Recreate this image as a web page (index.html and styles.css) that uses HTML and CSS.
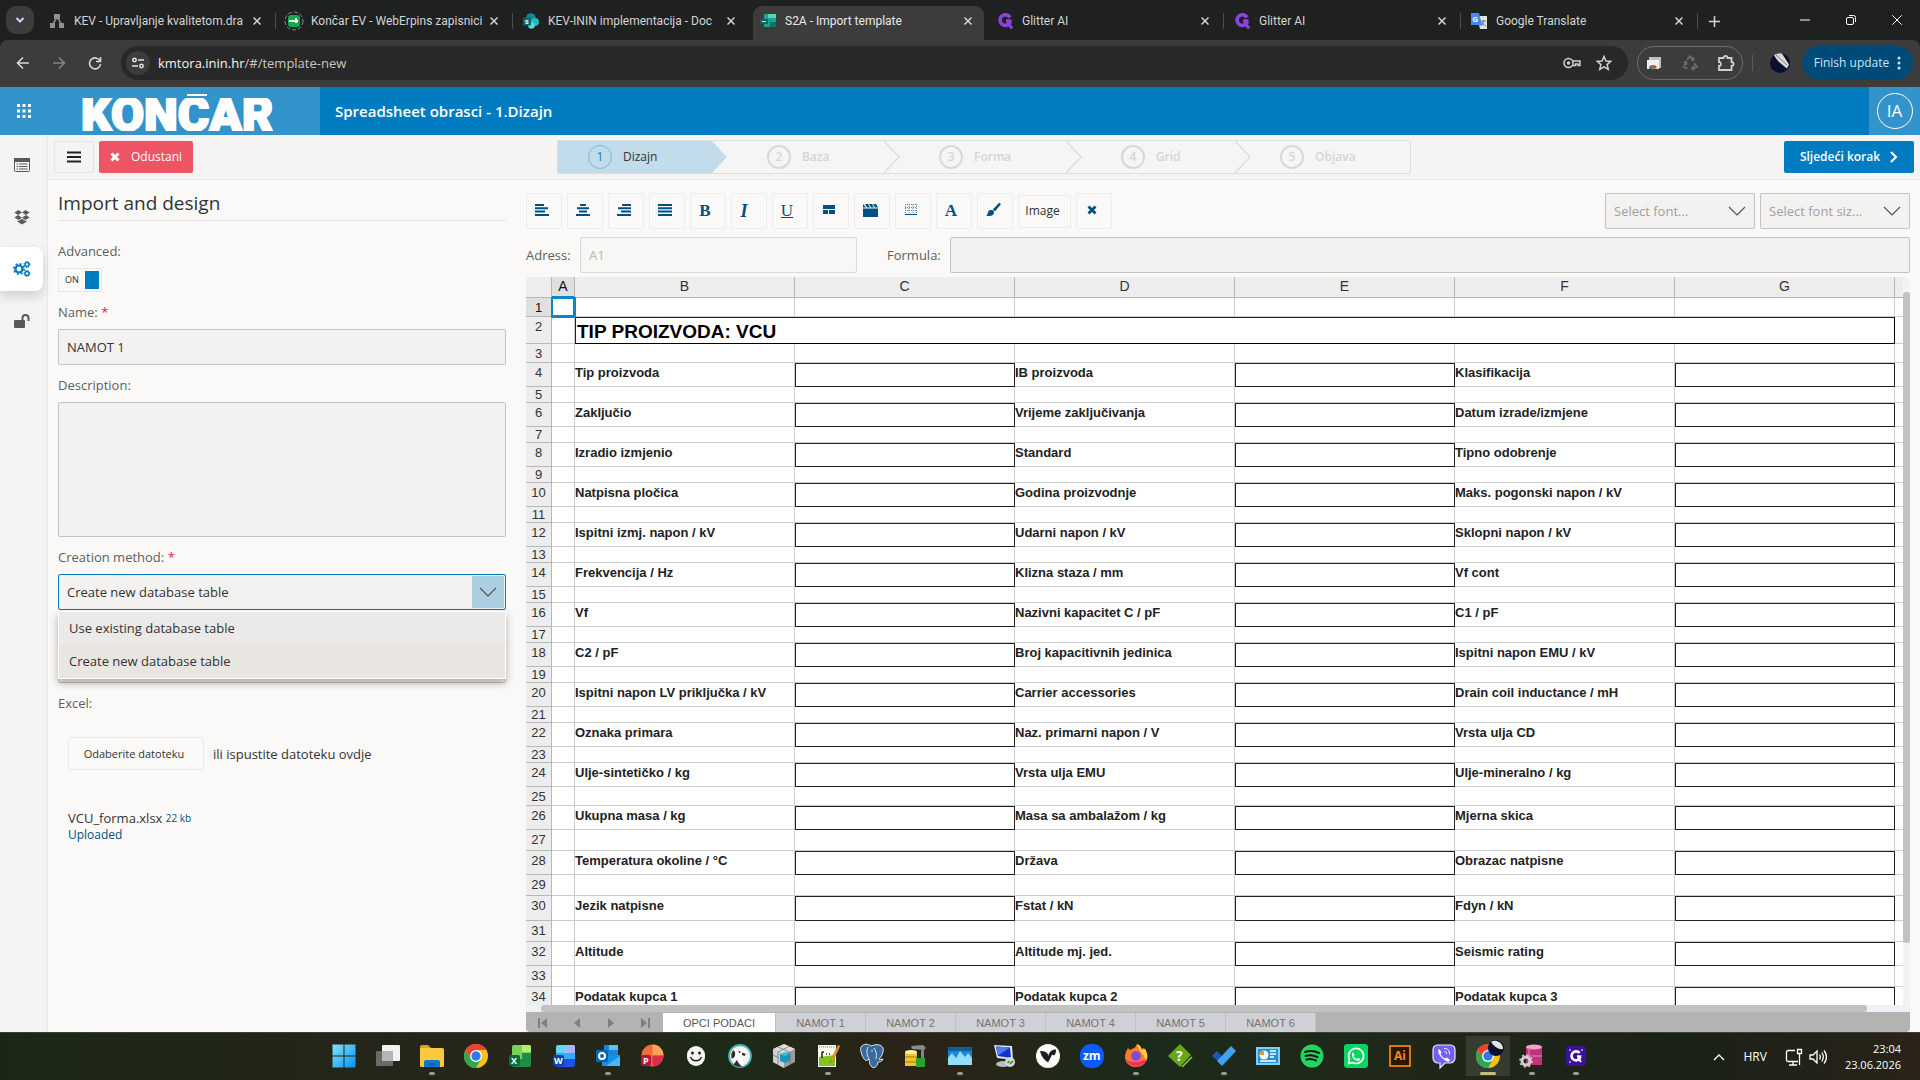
FILE: index.html
```html
<!DOCTYPE html>
<html lang="hr">
<head>
<meta charset="utf-8">
<title>S2A - Import template</title>
<link rel="stylesheet" href="styles.css">
</head>
<body>
<header class="browser">
  <div class="tabstrip">
    <button class="tabsearch" aria-label="Search tabs"><svg width="10" height="10" viewBox="0 0 10 10"><path d="M1.500 3l3.500 3.500L8.500 3" fill="none" stroke="#c7d8f5" stroke-width="2"/></svg></button>
    <div class="tab sep"><svg class="fav" viewBox="0 0 16 16"><g fill="#8f9191"><rect x="5" y="1" width="6" height="5"/><rect x="1" y="10" width="5" height="5"/><rect x="10" y="10" width="5" height="5"/></g><path d="M7.500 5L4 11M8.500 5l4 6" stroke="#8f9191" stroke-width="1.500"/></svg><span class="tabtitle">KEV - Upravljanje kvalitetom.dra</span><button class="close" aria-label="Close"><svg width="8" height="8" viewBox="0 0 8 8"><path d="M0.500 0.500l7 7M7.500 0.500l-7 7"/></svg></button></div>
    <div class="tab sep"><svg class="fav big" viewBox="0 0 20 20"><circle cx="10" cy="10" r="9" fill="none" stroke="#8b8d8d" stroke-dasharray="4 2"/><rect x="4" y="4" width="12" height="12" rx="3" fill="#0cab4f"/><path d="M5 10h9M12 7v5" stroke="#fff" stroke-width="2"/></svg><span class="tabtitle">Končar EV - WebErpins zapisnici</span><button class="close" aria-label="Close"><svg width="8" height="8" viewBox="0 0 8 8"><path d="M0.500 0.500l7 7M7.500 0.500l-7 7"/></svg></button></div>
    <div class="tab"><svg class="fav" viewBox="0 0 16 16"><circle cx="8" cy="5" r="4.800" fill="#138a93"/><circle cx="12" cy="9" r="4" fill="#28b5c4"/><circle cx="8.500" cy="12.500" r="3.300" fill="#5fd5dd"/><rect y="4.500" width="8" height="8" rx="1" fill="#036c70"/><text x="2" y="11" font-size="7" font-weight="700" fill="#fff">s</text></svg><span class="tabtitle">KEV-ININ implementacija - Doc</span><button class="close" aria-label="Close"><svg width="8" height="8" viewBox="0 0 8 8"><path d="M0.500 0.500l7 7M7.500 0.500l-7 7"/></svg></button></div>
    <div class="tab current"><svg class="fav" viewBox="0 0 16 16"><rect x="4" y="1" width="12" height="13" fill="#1aa295"/><path d="M8 1h8v4H8z" fill="#55d3c4"/><path d="M10 9h6v5h-6z" fill="#14706a"/><path d="M0 6h8v5H0z" fill="#0e635c"/><path d="M2 8.500h4" stroke="#cde9e6"/></svg><span class="tabtitle">S2A - Import template</span><button class="close" aria-label="Close"><svg width="8" height="8" viewBox="0 0 8 8"><path d="M0.500 0.500l7 7M7.500 0.500l-7 7"/></svg></button></div>
    <div class="tab sep"><svg class="fav" viewBox="0 0 16 16"><path d="M13 4.500A5.300 5.300 0 1 0 12.800 10V8H9" fill="none" stroke="#8b43e0" stroke-width="3.600"/><path d="M11 10l4 5.500" stroke="#8b43e0" stroke-width="3"/></svg><span class="tabtitle">Glitter AI</span><button class="close" aria-label="Close"><svg width="8" height="8" viewBox="0 0 8 8"><path d="M0.500 0.500l7 7M7.500 0.500l-7 7"/></svg></button></div>
    <div class="tab sep"><svg class="fav" viewBox="0 0 16 16"><path d="M13 4.500A5.300 5.300 0 1 0 12.800 10V8H9" fill="none" stroke="#8b43e0" stroke-width="3.600"/><path d="M11 10l4 5.500" stroke="#8b43e0" stroke-width="3"/></svg><span class="tabtitle">Glitter AI</span><button class="close" aria-label="Close"><svg width="8" height="8" viewBox="0 0 8 8"><path d="M0.500 0.500l7 7M7.500 0.500l-7 7"/></svg></button></div>
    <div class="tab sep"><svg class="fav" viewBox="0 0 16 16"><path d="M6 3h10v13H9z" fill="#dfe1e4"/><path d="M10 8h5M12.500 7v1c0 3-1 4-3 5M11 9c0 2 2 3 4 4" stroke="#6c7a86" fill="none"/><path d="M0 0h8l3 12H0z" fill="#4687f0"/><text x="1.500" y="8.500" font-size="8" font-weight="700" fill="#fff">G</text></svg><span class="tabtitle">Google Translate</span><button class="close" aria-label="Close"><svg width="8" height="8" viewBox="0 0 8 8"><path d="M0.500 0.500l7 7M7.500 0.500l-7 7"/></svg></button></div>
    <button class="newtab" aria-label="New tab"><svg width="11" height="11" viewBox="0 0 11 11"><path d="M5.500 0v11M0 5.500h11" stroke="#d6d6d6" stroke-width="1.500"/></svg></button>
    <div class="winctl">
      <button aria-label="Minimise"><svg width="10" height="10" viewBox="0 0 10 10"><path d="M0 5h10"/></svg></button>
      <button aria-label="Restore"><svg width="10" height="10" viewBox="0 0 10 10"><rect x="0.500" y="2.500" width="7" height="7" rx="1.500"/><path d="M3 0.500h4.500a2 2 0 0 1 2 2V7"/></svg></button>
      <button aria-label="Close window"><svg width="10" height="10" viewBox="0 0 10 10"><path d="M0.300 0.300l9.400 9.400M9.700 0.300L0.300 9.700"/></svg></button>
    </div>
  </div>
  <div class="navbar">
    <div class="navbtns">
      <button aria-label="Back"><svg width="14" height="14" viewBox="0 0 14 14"><path d="M13 7H1.500M7 1.500L1.500 7 7 12.500"/></svg></button>
      <button class="dim" aria-label="Forward"><svg width="14" height="14" viewBox="0 0 14 14"><path d="M1 7h11.500M7 1.500L12.500 7 7 12.500"/></svg></button>
      <button aria-label="Reload"><svg width="14" height="14" viewBox="0 0 14 14"><path d="M12 5A5.500 5.500 0 1 0 12.500 8M12.500 1v4.500H8"/></svg></button>
    </div>
    <div class="omnibox">
      <button class="site" aria-label="Site information"><svg width="14" height="14" viewBox="0 0 14 14"><circle cx="3.500" cy="4" r="1.700"/><path d="M7 4h6M1 10h6"/><circle cx="10.500" cy="10" r="1.700"/></svg></button>
      <p class="url"><b>kmtora.inin.hr</b>/#/template-new</p>
      <svg class="oi" width="18" height="14" viewBox="0 0 18 14"><circle cx="5.500" cy="7" r="4.500"/><circle cx="5.500" cy="7" r="1" /><path d="M9.500 5H17v4.500h-2V8h-2.500v1.500H9.500"/></svg>
      <svg class="oi" width="16" height="16" viewBox="0 0 16 16"><path d="M8 1.500l2 4.500 4.800.4-3.700 3.200 1.200 4.800L8 11.900l-4.300 2.500 1.200-4.800L1.200 6.400 6 6z"/></svg>
    </div>
    <div class="exts">
      <svg width="16" height="16" viewBox="0 0 16 16"><rect x="3" y="2" width="12" height="11" fill="#bfc1c3"/><rect x="1" y="5" width="12" height="9" fill="#f3f3f3"/><path d="M3 14a4 4 0 0 1 8 0z" fill="#e33b2e"/><path d="M3 14a4 4 0 0 1 1-3l2 3z" fill="#22a550"/><path d="M8 14l3-2v2z" fill="#f5bd16"/><circle cx="7" cy="13" r="1.500" fill="#4285f4"/></svg>
      <svg width="16" height="16" viewBox="0 0 16 16" fill="none" stroke="#707070" stroke-width="1.500"><path d="M5 5l3-4 3 4M9 5h2.500V2M4 7l-2.500 5 4 1.500M2 7h2.500v3M12 8l3 4-5 1.500M12 11l-2 2.500 2 2"/></svg>
      <svg width="18" height="18" viewBox="0 0 18 18" fill="none" stroke="#cfcfcf" stroke-width="1.800"><path d="M2 4h4.500a2 2 0 0 1 4 0H14.500v4a2 2 0 0 1 0 4v4H2v-4c2.500 0 2.500-4 0-4z"/></svg>
    </div>
    <i class="vsep"></i>
    <svg class="me" width="20" height="20" viewBox="0 0 20 20"><circle cx="10" cy="10" r="10" fill="#0a1030"/><path d="M4 2a10 10 0 0 1 8-1.500l7 11-2 4C12 12 7 8 4 2z" fill="#d9d8cc"/><path d="M6 2l11 10" stroke="#7c8087"/></svg>
    <button class="update">Finish update <svg width="4" height="14" viewBox="0 0 4 14" fill="#c2e7ff"><circle cx="2" cy="2" r="1.500"/><circle cx="2" cy="7" r="1.500"/><circle cx="2" cy="12" r="1.500"/></svg></button>
  </div>
</header>

<div class="apphead">
  <div class="brand">
    <svg width="14" height="14" viewBox="0 0 14 14" fill="#fff"><path d="M0 0h3v3H0zM5.500 0h3v3h-3zM11 0h3v3h-3zM0 5.500h3v3H0zM5.500 5.500h3v3h-3zM11 5.500h3v3h-3zM0 11h3v3H0zM5.500 11h3v3h-3zM11 11h3v3h-3z"/></svg>
    <div class="logo"><span>KONČAR</span></div>
  </div>
  <h1>Spreadsheet obrasci - 1.Dizajn</h1>
  <div class="user"><button>IA</button></div>
</div>

<div class="app">
  <nav class="side">
    <a href="#forms" aria-label="Forms"><svg width="16" height="14" viewBox="0 0 16 14"><rect x="0.500" y="0.500" width="15" height="13" rx="1" fill="none" stroke="#595959"/><path d="M0 0h16v4H0z" fill="#595959"/><path d="M2.500 6h1.500M2.500 8.500h1.500M2.500 11h1.500M5 6h8.500M5 8.500h8.500M5 11h8.500" stroke="#595959"/></svg></a>
    <a href="#modules" aria-label="Modules"><svg width="16" height="16" viewBox="0 0 16 16" fill="#595959"><path d="M4.500 1L8 3.500 4 6 .5 3.500zM11.500 1l4 2.500L12 6 8 3.500zM.5 8.500L4 6l4 2.700-3.500 2.300zM12 6l3.500 2.500-4 2.500L8 8.700zM8 9.700l3.500 2.300 1-.5v1.200L8 15.500l-4.500-2.800v-1.200l1 .5z"/></svg></a>
    <a class="on" href="#settings" aria-label="Settings"><svg width="18" height="16" viewBox="0 0 18 16" fill="none" stroke="#0078c0"><circle cx="6" cy="8" r="3.500" stroke-width="2.200"/><circle cx="6" cy="8" r="5.200" stroke-width="1.600" stroke-dasharray="2 2.080"/><circle cx="14" cy="3.500" r="2" stroke-width="1.500"/><circle cx="14" cy="3.500" r="3" stroke-dasharray="1.200 1.160"/><circle cx="14" cy="12.500" r="2" stroke-width="1.500"/><circle cx="14" cy="12.500" r="3" stroke-dasharray="1.200 1.160"/></svg></a>
    <a href="#access" aria-label="Access"><svg width="16" height="14" viewBox="0 0 16 14"><rect x="0" y="6" width="11" height="8" rx="1" fill="#595959"/><path d="M8.500 6V4a3 3 0 0 1 6 0v3" fill="none" stroke="#595959" stroke-width="2"/></svg></a>
  </nav>
  <div class="content">
    <div class="steps">
      <button class="menu" aria-label="Menu"><svg width="14" height="12" viewBox="0 0 14 12"><path d="M0 1.500h14M0 6h14M0 10.500h14" stroke="#222" stroke-width="2"/></svg></button>
      <button class="cancel"><svg width="10" height="10" viewBox="0 0 10 10"><path d="M1.500 1.500l7 7M8.500 1.500l-7 7" stroke="#fff" stroke-width="3"/></svg>Odustani</button>
      <ol class="stepper">
        <li class="active"><span class="step"><i>1</i>Dizajn</span><svg width="16" height="32" viewBox="0 0 16 32"><path d="M0 0l15 16L0 32z" fill="#c2dcec"/></svg></li>
        <li><span class="step"><i>2</i>Baza</span><svg width="16" height="32" viewBox="0 0 16 32"><path d="M0 0l15 16L0 32"/></svg></li>
        <li><span class="step"><i>3</i>Forma</span><svg width="16" height="32" viewBox="0 0 16 32"><path d="M0 0l15 16L0 32"/></svg></li>
        <li><span class="step"><i>4</i>Grid</span><svg width="16" height="32" viewBox="0 0 16 32"><path d="M0 0l15 16L0 32"/></svg></li>
        <li class="last"><span class="step"><i>5</i>Objava</span></li>
      </ol>
      <button class="next">Sljedeći korak<svg width="8" height="12" viewBox="0 0 8 12"><path d="M1 1l5 5-5 5" fill="none" stroke="#fff" stroke-width="2"/></svg></button>
    </div>
    <main class="work">
      <form class="panel">
        <h2>Import and design</h2>
        <div class="field"><label for="adv">Advanced:</label><div class="switch"><span>ON</span><input type="checkbox" id="adv" checked></div></div>
        <div class="field"><label for="name">Name: <em>*</em></label><input id="name" type="text" value="NAMOT 1"></div>
        <div class="field"><label for="desc">Description:</label><textarea id="desc"></textarea></div>
        <div class="field combo"><label for="method">Creation method: <em>*</em></label>
          <div class="selwrap open"><select id="method"><option>Create new database table</option><option>Use existing database table</option></select><span class="arrow"><svg width="18" height="10" viewBox="0 0 18 10"><path d="M1 1l8 8 8-8"/></svg></span></div>
          <ul class="popup" role="listbox"><li role="option">Use existing database table</li><li role="option" aria-selected="true">Create new database table</li></ul>
        </div>
        <div class="field"><label for="table">&nbsp;</label><input id="table" type="text"></div>
        <div class="field upload"><label for="pick">Excel:</label>
          <div class="drop"><button type="button" id="pick">Odaberite datoteku</button><span>ili ispustite datoteku ovdje</span></div>
          <p class="file">VCU_forma.xlsx <small>22 kb</small></p>
          <p class="state">Uploaded</p>
        </div>
      </form>
      <section class="editor">
        <div class="tools">
          <button aria-label="Left"><svg width="14" height="12" viewBox="0 0 14 12"><path d="M0 1h9M0 4.300h13M0 7.600h10M0 11h14"/></svg></button>
          <button aria-label="Centre"><svg width="14" height="12" viewBox="0 0 14 12"><path d="M4 1h6M1 4.300h12M3 7.600h8M0 11h14"/></svg></button>
          <button aria-label="Right"><svg width="14" height="12" viewBox="0 0 14 12"><path d="M5 1h9M1 4.300h13M4 7.600h10M0 11h14"/></svg></button>
          <button aria-label="Justify"><svg width="14" height="12" viewBox="0 0 14 12"><path d="M0 1h14M0 4.300h14M0 7.600h14M0 11h14"/></svg></button>
          <button class="tx">B</button>
          <button class="tx it">I</button>
          <button class="tx un">U</button>
          <button aria-label="Merge"><svg width="12" height="10" viewBox="0 0 12 10" fill="#005083" stroke="none"><path d="M0 0h12v4H0zM0 5h5v4H0zM6 5h6v4H6z"/></svg></button>
          <button aria-label="Fill"><svg width="15" height="13" viewBox="0 0 15 13" fill="#005083" stroke="none"><path d="M0 4.500h15V13H0zM0 0l3 3.500H0zM2 0h3l2 3.500H4zM6 0h3l2 3.500H8zM10 0h3l2 3.500h-3z"/></svg></button>
          <button aria-label="Borders"><svg width="12" height="12" viewBox="0 0 12 12" stroke="#6b8599" fill="none"><path d="M0 .5h12M0 3.500h12M0 6.500h12M.5 0v9M4 0v9M8 0v9M11.500 0v9" stroke-width="1" stroke-dasharray="1 1"/><path d="M0 10.500h12" stroke="#005083" stroke-width="1"/></svg></button>
          <button class="tx">A</button>
          <button aria-label="Brush"><svg width="15" height="14" viewBox="0 0 15 14" fill="#005083" stroke="none"><path d="M14.500 0L7 6l2 2zM6 7c1 0 2 1 2 2.500C8 12 5 14 0 12.500 2 12 1.500 9 3 7.500 4 7 5 7 6 7z"/><path d="M14 .5L8 7.500" stroke="#005083" stroke-width="2.500"/></svg></button>
          <button class="img">Image</button>
          <button aria-label="Clear"><svg width="10" height="10" viewBox="0 0 10 10"><path d="M1.500 1.500l7 7M8.500 1.500l-7 7" stroke-width="2.800"/></svg></button>
          <div class="picks">
            <div class="selwrap"><select aria-label="Font"><option>Select font...</option></select><span class="arrow"><svg width="18" height="10" viewBox="0 0 18 10"><path d="M1 1l8 8 8-8"/></svg></span></div>
            <div class="selwrap"><select aria-label="Font size"><option>Select font siz...</option></select><span class="arrow"><svg width="18" height="10" viewBox="0 0 18 10"><path d="M1 1l8 8 8-8"/></svg></span></div>
          </div>
        </div>
        <div class="refs">
          <label for="addr">Adress:</label><input id="addr" type="text" value="A1" disabled>
          <label class="fl" for="formula">Formula:</label><input id="formula" type="text">
        </div>
        <div class="sheet">
          <div class="view">
            <div class="grid">
            <table>
              <colgroup><col class="cn"><col class="ca"><col><col><col><col><col><col><col class="cz"></colgroup>
              <thead><tr><th></th><th class="sel">A</th><th>B</th><th>C</th><th>D</th><th>E</th><th>F</th><th>G</th><th></th></tr></thead>
              <tbody>
              <tr class="h19"><th class="cur">1</th><td class="cell"></td><td></td><td></td><td></td><td></td><td></td><td></td><td></td></tr>
              <tr class="h27"><th>2</th><td></td><td class="title" colspan="6">TIP PROIZVODA: VCU</td><td></td></tr>
              <tr class="h19"><th>3</th><td></td><td></td><td></td><td></td><td></td><td></td><td></td><td></td></tr>
              <tr class="h24"><th>4</th><td></td><td>Tip proizvoda</td><td class="box"></td><td>IB proizvoda</td><td class="box"></td><td>Klasifikacija</td><td class="box"></td><td></td></tr>
              <tr class="h16"><th>5</th><td></td><td></td><td></td><td></td><td></td><td></td><td></td><td></td></tr>
              <tr class="h24"><th>6</th><td></td><td>Zaključio</td><td class="box"></td><td>Vrijeme zaključivanja</td><td class="box"></td><td>Datum izrade/izmjene</td><td class="box"></td><td></td></tr>
              <tr class="h16"><th>7</th><td></td><td></td><td></td><td></td><td></td><td></td><td></td><td></td></tr>
              <tr class="h24"><th>8</th><td></td><td>Izradio izmjenio</td><td class="box"></td><td>Standard</td><td class="box"></td><td>Tipno odobrenje</td><td class="box"></td><td></td></tr>
              <tr class="h16"><th>9</th><td></td><td></td><td></td><td></td><td></td><td></td><td></td><td></td></tr>
              <tr class="h24"><th>10</th><td></td><td>Natpisna pločica</td><td class="box"></td><td>Godina proizvodnje</td><td class="box"></td><td>Maks. pogonski napon / kV</td><td class="box"></td><td></td></tr>
              <tr class="h16"><th>11</th><td></td><td></td><td></td><td></td><td></td><td></td><td></td><td></td></tr>
              <tr class="h24"><th>12</th><td></td><td>Ispitni izmj. napon / kV</td><td class="box"></td><td>Udarni napon / kV</td><td class="box"></td><td>Sklopni napon / kV</td><td class="box"></td><td></td></tr>
              <tr class="h16"><th>13</th><td></td><td></td><td></td><td></td><td></td><td></td><td></td><td></td></tr>
              <tr class="h24"><th>14</th><td></td><td>Frekvencija / Hz</td><td class="box"></td><td>Klizna staza / mm</td><td class="box"></td><td>Vf cont</td><td class="box"></td><td></td></tr>
              <tr class="h16"><th>15</th><td></td><td></td><td></td><td></td><td></td><td></td><td></td><td></td></tr>
              <tr class="h24"><th>16</th><td></td><td>Vf</td><td class="box"></td><td>Nazivni kapacitet C / pF</td><td class="box"></td><td>C1 / pF</td><td class="box"></td><td></td></tr>
              <tr class="h16"><th>17</th><td></td><td></td><td></td><td></td><td></td><td></td><td></td><td></td></tr>
              <tr class="h24"><th>18</th><td></td><td>C2 / pF</td><td class="box"></td><td>Broj kapacitivnih jedinica</td><td class="box"></td><td>Ispitni napon EMU / kV</td><td class="box"></td><td></td></tr>
              <tr class="h16"><th>19</th><td></td><td></td><td></td><td></td><td></td><td></td><td></td><td></td></tr>
              <tr class="h24"><th>20</th><td></td><td>Ispitni napon LV priključka / kV</td><td class="box"></td><td>Carrier accessories</td><td class="box"></td><td>Drain coil inductance / mH</td><td class="box"></td><td></td></tr>
              <tr class="h16"><th>21</th><td></td><td></td><td></td><td></td><td></td><td></td><td></td><td></td></tr>
              <tr class="h24"><th>22</th><td></td><td>Oznaka primara</td><td class="box"></td><td>Naz. primarni napon / V</td><td class="box"></td><td>Vrsta ulja CD</td><td class="box"></td><td></td></tr>
              <tr class="h16"><th>23</th><td></td><td></td><td></td><td></td><td></td><td></td><td></td><td></td></tr>
              <tr class="h24"><th>24</th><td></td><td>Ulje-sintetičko / kg</td><td class="box"></td><td>Vrsta ulja EMU</td><td class="box"></td><td>Ulje-mineralno / kg</td><td class="box"></td><td></td></tr>
              <tr class="h19"><th>25</th><td></td><td></td><td></td><td></td><td></td><td></td><td></td><td></td></tr>
              <tr class="h24"><th>26</th><td></td><td>Ukupna masa / kg</td><td class="box"></td><td>Masa sa ambalažom / kg</td><td class="box"></td><td>Mjerna skica</td><td class="box"></td><td></td></tr>
              <tr class="h21"><th>27</th><td></td><td></td><td></td><td></td><td></td><td></td><td></td><td></td></tr>
              <tr class="h24"><th>28</th><td></td><td>Temperatura okoline / °C</td><td class="box"></td><td>Država</td><td class="box"></td><td>Obrazac natpisne</td><td class="box"></td><td></td></tr>
              <tr class="h21"><th>29</th><td></td><td></td><td></td><td></td><td></td><td></td><td></td><td></td></tr>
              <tr class="h25"><th>30</th><td></td><td>Jezik natpisne</td><td class="box"></td><td>Fstat / kN</td><td class="box"></td><td>Fdyn / kN</td><td class="box"></td><td></td></tr>
              <tr class="h21"><th>31</th><td></td><td></td><td></td><td></td><td></td><td></td><td></td><td></td></tr>
              <tr class="h24"><th>32</th><td></td><td>Altitude</td><td class="box"></td><td>Altitude mj. jed.</td><td class="box"></td><td>Seismic rating</td><td class="box"></td><td></td></tr>
              <tr class="h21"><th>33</th><td></td><td></td><td></td><td></td><td></td><td></td><td></td><td></td></tr>
              <tr class="h24"><th>34</th><td></td><td>Podatak kupca 1</td><td class="box"></td><td>Podatak kupca 2</td><td class="box"></td><td>Podatak kupca 3</td><td class="box"></td><td></td></tr>
              </tbody>
            </table>
            </div>
            <div class="vbar"><i></i></div>
          </div>
          <div class="hbar"><i></i></div>
          <div class="sheets">
            <div class="pager">
              <button aria-label="First"><svg width="10" height="10" viewBox="0 0 10 10"><path d="M0 0h2v10H0zM9 0v10L3 5z"/></svg></button>
              <button aria-label="Previous"><svg width="10" height="10" viewBox="0 0 10 10"><path d="M8 0v10L2 5z"/></svg></button>
              <button aria-label="Next"><svg width="10" height="10" viewBox="0 0 10 10"><path d="M2 0v10l6-5z"/></svg></button>
              <button aria-label="Last"><svg width="10" height="10" viewBox="0 0 10 10"><path d="M8 0h2v10H8zM1 0v10l6-5z"/></svg></button>
            </div>
            <button class="sh on">OPCI PODACI</button><button class="sh">NAMOT 1</button><button class="sh">NAMOT 2</button><button class="sh">NAMOT 3</button><button class="sh">NAMOT 4</button><button class="sh">NAMOT 5</button><button class="sh">NAMOT 6</button>
          </div>
        </div>
      </section>
    </main>
  </div>
</div>

<footer class="taskbar">
  <div class="pins">
    <button aria-label="Start"><svg viewBox="0 0 24 24"><defs><linearGradient id="w" x1="0" y1="0" x2="1" y2="1"><stop offset="0" stop-color="#7fe3ff"/><stop offset="1" stop-color="#0a93f0"/></linearGradient></defs><path d="M0.500 0.500h11v11h-11zM12.500 0.500h11v11h-11zM0.500 12.500h11v11h-11zM12.500 12.500h11v11h-11z" fill="url(#w)"/></svg></button>
    <button aria-label="Task view"><svg viewBox="0 0 24 24"><rect x="0" y="7" width="17" height="15" rx="1" fill="#6a6a68"/><rect x="6" y="1" width="18" height="16" rx="1" fill="#f2f2f2"/><path d="M6 7h11v10H6z" fill="#b5b5b5"/></svg></button>
    <button class="run" aria-label="Explorer"><svg viewBox="0 0 24 24"><path d="M0 3a2 2 0 0 1 2-2h6l3 3v4H0z" fill="#e2a117"/><rect y="4" width="24" height="19" rx="1.500" fill="#fcc93d"/><path d="M4 23v-5a2 2 0 0 1 2-2h12a2 2 0 0 1 2 2v5z" fill="#1277c9"/><path d="M8 20h8" stroke="#0a4f91"/></svg></button>
    <button aria-label="Chrome"><svg viewBox="0 0 24 24"><circle cx="12" cy="12" r="12" fill="#fbc116"/><path d="M12 6h10.400A12 12 0 0 0 1.600 6l5.200 9z" fill="#ea4335"/><path d="M1.600 6A12 12 0 0 0 12 24l5.200-9-5.200 3-5.200-3z" fill="#30a852"/><circle cx="12" cy="12" r="6" fill="#fff"/><circle cx="12" cy="12" r="4.700" fill="#2b7cf0"/></svg></button>
    <button aria-label="Excel"><svg viewBox="0 0 24 24"><rect x="4" y="1" width="19" height="22" rx="2" fill="#1f8d45"/><path d="M6 1h15a2 2 0 0 1 2 2v6H14v6H4V3a2 2 0 0 1 2-2z" fill="#7cd05a"/><path d="M14 1h7a2 2 0 0 1 2 2v5h-9z" fill="#b3ee6d"/><rect x="1" y="11" width="11" height="11" rx="2" fill="#0f6b38"/><text x="3" y="20" class="it9">X</text></svg></button>
    <button aria-label="Word"><svg viewBox="0 0 24 24"><rect x="4" y="1" width="19" height="22" rx="2" fill="#1c54e0"/><path d="M6 1h15a2 2 0 0 1 2 2v12H4V3a2 2 0 0 1 2-2z" fill="#3ca6fa"/><path d="M13 1h8a2 2 0 0 1 2 2v6H13z" fill="#a9b5fb"/><path d="M6 1h7v8H4V3z" fill="#63d5fb"/><rect x="1" y="11" width="11" height="11" rx="2" fill="#1441b0"/><text x="2" y="20" class="it9">W</text></svg></button>
    <button class="run" aria-label="Outlook"><svg viewBox="0 0 24 24"><rect x="8" y="1" width="14" height="16" fill="#1d85d8"/><path d="M13 1h9v5h-9z" fill="#4fc6f7"/><path d="M6 11l18 0v11H6z" fill="#1591e6"/><path d="M24 12v10H10z" fill="#46b8f5"/><rect y="6" width="12" height="12" rx="1" fill="#0364b8"/><circle cx="6" cy="12" r="3" fill="none" stroke="#fff" stroke-width="2"/></svg></button>
    <button aria-label="PowerPoint"><svg viewBox="0 0 24 24"><circle cx="12.500" cy="11.500" r="11" fill="#f26a3d"/><path d="M12.500.5a11 11 0 0 1 11 11h-11z" fill="#ffa25a"/><path d="M12.500 22.500a11 11 0 0 0 11-11h-11z" fill="#d92f4a"/><rect x="1" y="11" width="10" height="11" rx="2" fill="#bb1738"/><text x="3" y="20" class="it9">P</text></svg></button>
    <button aria-label="Assistant"><svg viewBox="0 0 24 24"><rect x="3" y="2" width="18" height="20" rx="9" fill="#f5f5f5"/><circle cx="8.500" cy="9" r="1.500" fill="#222"/><circle cx="15.500" cy="9" r="1.500" fill="#222"/><path d="M6.500 13c2 5 9 5 11 0" fill="none" stroke="#222" stroke-width="1.500"/></svg></button>
    <button aria-label="DBeaver"><svg viewBox="0 0 24 24"><circle cx="12" cy="12" r="11" fill="#f4f1ee" stroke="#45adb5" stroke-width="1.800"/><path d="M5 8c1-3 4-3.500 6-3 3-1 7 0 8 4l-1.500 1c.5 2-.5 3-2.500 3-1 2 0 5 2 8l-3 1.200c-1-3-4-5-5-8-2 0-4 0-5 2-1-3-.5-6 1-8.200z" fill="#fff"/><path d="M5 6.500c2 0 2.500 2 2 5-.3 2-2 3-3.500 3C2.800 11 3.500 8 5 6.500zM14 8.500l4 1.500-1.500 2-2.500-1zM9 16c1 3 3 5 5 6.500-3 .5-6 0-8.500-2z" fill="#3b2b26"/><circle cx="11.500" cy="8" r="1" fill="#3b2b26"/></svg></button>
    <button aria-label="VirtualBox"><svg viewBox="0 0 24 24"><path d="M12 0l11 5v13l-11 6-11-6V5z" fill="#9b9b9b"/><path d="M12 0l11 5-11 5L1 5z" fill="#dedede"/><path d="M1 5l11 5v14L1 18z" fill="#d0d0d0"/><path d="M8 10l4 1 6-2v7l-5 3-5-2z" fill="#1697bd"/><path d="M8 10l5-2 5 1-5 3z" fill="#42bade"/><path d="M6 3l11 5M18 2L6 8M6 8v13M1 11l6 3M18 8v13" stroke="#686868" stroke-width=".7"/></svg></button>
    <button class="run" aria-label="Editor"><svg viewBox="0 0 24 24"><path d="M2 1h18v22H2z" fill="#f7f8ee"/><path d="M3 13l16-2v11H3z" fill="#83c51d"/><path d="M6 8v6M6 8h2M10 10h1M13 10h1" stroke="#222" stroke-width="1.500"/><path d="M22 1l-7 15-1 3 3-2 7-15z" fill="#eda82a" stroke="#a35e12" stroke-width=".6"/><path d="M3 3h15" stroke="#777" stroke-dasharray="1 1"/></svg></button>
    <button aria-label="PostgreSQL"><svg viewBox="0 0 24 24"><path d="M1 3c3-4 7-3 10-1 5-2 10-2 12 2 1 5-2 9-4 11 1 1 3 0 4 0-1 3-4 3-5 3-1 6-5 7-7 4-2-2-1-4-2-7-3 3-5 1-7-4C1 8 0 5 1 3z" fill="#386b9b" stroke="#dfe8ef" stroke-width="1"/><path d="M8 3c-2 4-1 8 1 12M14 4c2 3 3 6 2 11M11 7l2 0" stroke="#dfe8ef" fill="none"/></svg></button>
    <button aria-label="Database tools"><svg viewBox="0 0 24 24"><path d="M1 8h12v14H1z" fill="#f2c230"/><ellipse cx="7" cy="8" rx="6" ry="2" fill="#fff2a8"/><path d="M1 13h12M1 18h12" stroke="#a77b08"/><path d="M7 2l12-1 3 3-2 2-12-1z" fill="#8c8c8c"/><path d="M17 6h3v9h-3z" fill="#6b8aa8"/><path d="M12 14h9v9h-9z" fill="#2ca02c"/></svg></button>
    <button class="run" aria-label="Monitor"><svg viewBox="0 0 24 24"><path d="M0 3h24v18H0z" fill="#1b86d4"/><path d="M0 3h24v4H0z" fill="#0f5f9f"/><path d="M0 14l4-5 4 5 4-7 5 6 3-4 4 5v7H0z" fill="#94dcf7"/></svg></button>
    <button aria-label="Remote desktop"><svg viewBox="0 0 24 24"><path d="M2 1l18 1 1 14-16-2z" fill="#dce5f5"/><path d="M4 2.500l14 1 1 10.500-13-2z" fill="#1530c8"/><path d="M4 2.500l14 1-12 8z" fill="#4d7bf0"/><ellipse cx="11" cy="20" rx="7" ry="3" fill="#b8bcc2"/><circle cx="18" cy="18" r="5" fill="#d4d8d4"/><path d="M15.500 19l2-2M18 20l3-3" stroke="#1c8a3b" stroke-width="1.500"/></svg></button>
    <button aria-label="Notes"><svg viewBox="0 0 24 24"><circle cx="12" cy="12" r="12" fill="#fbfbf8"/><path d="M4 7c4 0 8 1 8.500 5C13 8 15.500 5.500 20 5.500c0 3-.5 5-2 6l-2-1c-1 3-2.500 5-4 8C8 16 5 12 4 7z" fill="#1c1c1c"/></svg></button>
    <button aria-label="Zoom"><svg viewBox="0 0 24 24"><rect width="24" height="24" rx="11" fill="#0b5cff"/><text x="3" y="16" font-size="12" font-weight="700" fill="#fff">zm</text></svg></button>
    <button class="run" aria-label="Firefox"><svg viewBox="0 0 24 24"><path d="M4 4l2 2 4-2c1 0 2-2 3-4 3 1 4 3 4 5l3-1c5 7 4 19-8 19C3 23-1 15 2 8z" fill="#ff7b2e"/><path d="M2 15c2 9 18 11 21-1-4 4-16 6-21 1z" fill="#f62f62"/><path d="M13 0c3 1 4 3 5 6l3-1c3 5 3 9 1 12-1-7-7-8-9-17z" fill="#ffcf3c"/><circle cx="12" cy="12" r="4.800" fill="#7d48dc"/></svg></button>
    <button aria-label="Help"><svg viewBox="0 0 24 24"><path d="M12 0l11 11-11 12L0 12z" fill="#67a716"/><path d="M14 23l10-10" stroke="#92ce42" stroke-width="1.500"/><text x="8" y="17" font-size="14" font-weight="700" fill="#fff">?</text></svg></button>
    <button class="run" aria-label="To Do"><svg viewBox="0 0 24 24"><path d="M0 12l5-5 7 7-4 5z" fill="#1c57b8"/><path d="M5 17L19 2l5 5L10 22z" fill="#41a3f0"/></svg></button>
    <button aria-label="Control panel"><svg viewBox="0 0 24 24"><path d="M0 3h24v18H0z" fill="#7fd0f5"/><path d="M2 5h20v14H2z" fill="#2093d6"/><circle cx="8" cy="11" r="4.500" fill="#fff"/><path d="M8 11V6.500a4.500 4.500 0 0 0-4.500 4.500z" fill="#f2962a"/><path d="M14 7h6M14 10h6M14 13h4M4 17h16" stroke="#fff" stroke-width="1.500"/></svg></button>
    <button aria-label="Spotify"><svg viewBox="0 0 24 24"><circle cx="12" cy="12" r="11.500" fill="#1ed760"/><path d="M5 8c5-1.500 10-1 14 1M5.500 12c4-1.200 8-.8 12 1M6.500 15.500c3-.8 6-.6 9.500 1" fill="none" stroke="#111" stroke-width="2" stroke-linecap="round"/></svg></button>
    <button aria-label="WhatsApp"><svg viewBox="0 0 24 24"><rect width="24" height="24" rx="3" fill="#0bd561"/><path d="M4.500 19.500l1-4a7.500 7.500 0 1 1 3 3z" fill="none" stroke="#fff" stroke-width="1.600"/><path d="M9 8l1.500 3-1 1c1 2 2 2.500 3 3l1-1 3 1c-1 4-9 1-8.500-5z" fill="#fff"/></svg></button>
    <button aria-label="Illustrator"><svg viewBox="0 0 24 24"><rect x="2" y="2" width="20" height="20" fill="#2c1600" stroke="#f58a10" stroke-width="1.700"/><text x="6" y="16" font-size="12" font-weight="700" fill="#f58a10">Ai</text></svg></button>
    <button aria-label="Viber"><svg viewBox="0 0 24 24"><path d="M5 1h14a5 5 0 0 1 4 5v8a5 5 0 0 1-5 5h-5l-5 5v-5H6a5 5 0 0 1-5-5V6a5 5 0 0 1 4-5z" fill="#7360f2" stroke="#e9e6ff" stroke-width="1.200"/><path d="M7 5l2.500 3-1 2c1 2.500 2.500 3.500 4.500 4.500l2-1 3 2.500c-1 3-5 1-8-2S5 7 7 5z" fill="#fff"/><path d="M12 4.500c4 0 5.500 2 5.500 6M12.500 7.500c1.500 0 2 1 2 2.500" stroke="#fff" fill="none"/></svg></button>
    <button class="run front" aria-label="Chrome window"><svg viewBox="0 0 24 24"><circle cx="12" cy="12" r="12" fill="#fbc116"/><path d="M12 6h10.400A12 12 0 0 0 1.600 6l5.200 9z" fill="#ea4335"/><path d="M1.600 6A12 12 0 0 0 12 24l5.200-9-5.200 3-5.200-3z" fill="#30a852"/><circle cx="12" cy="12" r="6" fill="#fff"/><circle cx="12" cy="12" r="4.700" fill="#2b7cf0"/><circle cx="20" cy="4" r="8" fill="#0a1030"/><path d="M15-2a8 8 0 0 1 12 7c-5 1-9-3-12-7z" fill="#e5e3d8"/></svg></button>
    <button class="run" aria-label="SQL"><svg viewBox="0 0 24 24"><path d="M6 3h16v18H6z" fill="#c0337a"/><ellipse cx="14" cy="3" rx="8" ry="2.500" fill="#f0a3cb"/><path d="M9 4v18M6 12h16" stroke="#e26aa8" stroke-width="1.500"/><circle cx="6" cy="17" r="4" fill="none" stroke="#cfcfcf" stroke-width="3"/><circle cx="6" cy="17" r="6" fill="none" stroke="#cfcfcf" stroke-dasharray="2 2.700" stroke-width="1.600"/></svg></button>
    <button class="run" aria-label="Glitter"><svg viewBox="0 0 24 24"><rect x="2" y="2" width="20" height="20" rx="3" fill="#3a1196"/><path d="M15.500 9A4.500 4.500 0 1 0 16 14v-1.500h-3" fill="none" stroke="#fff" stroke-width="2.600"/><path d="M14 14l3 4" stroke="#fff" stroke-width="2"/><path d="M6 5v2M18 5v2M5 18h2" stroke="#fff"/></svg></button>
  </div>
  <div class="tray">
    <svg width="12" height="8" viewBox="0 0 12 8"><path d="M1 7l5-5 5 5"/></svg>
    <span class="lang">HRV</span>
    <span class="net"><svg width="18" height="18" viewBox="0 0 18 18"><path d="M10 2.500H3A1.500 1.500 0 0 0 1.500 4v8A1.500 1.500 0 0 0 3 13.500h10M8 14v3M4 17h8M12.500 1.500h4v4h-4zM14.500 6v11"/></svg><svg width="18" height="16" viewBox="0 0 18 16"><path d="M1 6v4h3l4 4V2L4 6zM10.500 5.500c1 1.500 1 3.500 0 5M12.800 3.500c2 3 2 6 0 9M15 1.500c3 4 3 9 0 13"/></svg></span>
    <time>23:04<br>23.06.2026</time>
  </div>
</footer>
</body>
</html>
```
FILE: styles.css
```css
* { box-sizing: border-box; }
body {
  margin: 0;
  height: 100vh;
  display: flex;
  flex-direction: column;
  overflow: hidden;
  background: #faf9f8;
  color: #333;
  font: 13px/20px "Open Sans", "Noto Sans", sans-serif;
}
button, input, select, textarea { font: inherit; color: inherit; margin: 0; }
button { border: 0; background: none; padding: 0; display: flex; align-items: center; justify-content: center; white-space: nowrap; }
h1, h2, p, ul, ol { margin: 0; padding: 0; font-weight: 400; list-style: none; }
svg { display: block; flex: none; }

/* browser frame */
.browser { background: #1f2020; flex: none; }
.tabstrip { display: flex; height: 40px; padding: 0 0 0 6px; font: 12px/20px Roboto, sans-serif; color: #d3d4d4; }
.tabsearch { width: 28px; height: 28px; margin: 6px 5px 0 0; border-radius: 10px; background: #3c3c3c; }
.tab { position: relative; flex: 0 1 237px; display: flex; align-items: center; gap: 9px; padding: 2px 11px 0 10px; min-width: 0; }
.tab.sep::after { content: ""; position: absolute; right: 0; top: 13px; width: 1px; height: 16px; background: #4a4b4b; }
.fav { width: 16px; height: 16px; }
.fav.big { width: 20px; height: 20px; margin: 0 -2px; }
.tabtitle { flex: 1; min-width: 0; margin-right: -8px; overflow: hidden; white-space: nowrap; }
.close { width: 16px; height: 16px; stroke: #d3d4d4; stroke-width: 1.5; }
.current::before { content: ""; position: absolute; z-index: -1; inset: 6px 3px 0; background: #3c3c3c; border-radius: 9px 9px 0 0; }
.current { z-index: 0; color: #e9e9e9; }
.newtab { width: 28px; margin: 2px 0 0 2px; }
.winctl { display: flex; margin-left: auto; stroke: #fff; fill: none; }
.winctl button { width: 46px; fill: none; }
.navbar { display: flex; align-items: center; height: 47px; padding: 0 7px 1px 5px; background: #3c3c3c; border-radius: 8px 8px 0 0; color: #e3e3e3; }
.navbtns { display: flex; }
.navbtns button { width: 36px; height: 34px; fill: none; stroke: #d8d8d8; stroke-width: 1.6; }
.navbtns svg { fill: none; }
.navbtns .dim { stroke: #858585; }
.omnibox { flex: 1; display: flex; align-items: center; height: 34px; margin-left: 8px; padding: 0 16px 0 5px; border-radius: 17px; background: #282828; }
.site { width: 24px; height: 24px; border-radius: 12px; background: #3c3c3c; margin-right: 8px; stroke: #e3e3e3; stroke-width: 1.5; }
.site svg, .oi { fill: none; }
.url { flex: 1; color: #c7c7c7; }
.url b { font-weight: 400; color: #f3f3f3; }
.oi { stroke: #d0d0d0; stroke-width: 1.5; margin-left: 15px; }
.exts { display: flex; align-items: center; justify-content: space-between; width: 106px; height: 34px; margin-left: 9px; padding: 0 7px 0 8px; border: 1px solid #6b6b6b; border-radius: 17px; }
.vsep { width: 1px; height: 16px; margin: 0 17px 0 9px; background: #5b5b5b; }
.update { gap: 8px; width: 111px; height: 34px; margin-left: 12px; border-radius: 17px; background: #004a77; color: #c2e7ff; font-size: 12px; }

/* application header */
.apphead { display: flex; align-items: center; flex: none; height: 48px; background: #027cc1; color: #fff; }
.brand { width: 320px; height: 48px; display: flex; align-items: center; padding-left: 17px; background: #3393cb; }
.logo { position: relative; margin-left: 50px; align-self: flex-end; padding-bottom: 4px; }
.logo::before { content: ""; position: absolute; left: 106px; top: -4px; width: 20px; height: 2px; background: #fff; }
.logo span { display: block; height: 33px; line-height: 33px; overflow: hidden; font-family: Roboto, sans-serif; font-size: 48px; font-weight: 900; -webkit-text-stroke: 2px #fff; }
.apphead h1 { flex: 1; margin-left: 15px; font-size: 15px; font-weight: 600; }
.user { width: 51px; height: 48px; background: #3393cb; display: grid; place-items: center; }
.user button { width: 36px; height: 36px; border: 1px solid #fff; border-radius: 18px; font-size: 17px; }

/* layout */
.app { flex: 1; display: flex; min-height: 0; }
.side { flex: none; width: 48px; display: flex; flex-direction: column; gap: 8px; padding-top: 8px; background: #f5f4f2; border-right: 1px solid #ebe9e7; }
.side a { height: 44px; width: 43px; display: grid; place-items: center; }
.side .on { background: #fff; border-radius: 0 8px 8px 0; box-shadow: 0 5px 12px rgba(0,0,0,.16); }
.content { flex: 1; min-width: 0; display: flex; flex-direction: column; }
.steps { flex: none; display: flex; align-items: center; height: 45px; padding: 5px 6px; background: #f5f4f2; border-bottom: 1px solid #eceae8; }
.menu { width: 40px; height: 32px; border: 1px solid #e6e4e2; border-radius: 2px; }
.cancel { width: 94px; height: 32px; margin-left: 5px; gap: 11px; border-radius: 2px; background: #ed5565; color: #fff; font-size: 12px; }
.stepper { display: flex; width: 854px; height: 34px; margin: 0 auto 0 364px; border: 1px solid #dedede; border-radius: 2px; background: #f5f5f5; color: #d5d5d5; font-size: 12px; font-weight: 600; }
.stepper li { flex: 1 1 auto; display: flex; fill: none; stroke: #dedede; }
.stepper .last { flex: none; width: 159px; }
.stepper svg path { stroke-width: 1.5; }
.step { flex: 1; display: flex; align-items: center; gap: 11px; padding-left: 39px; white-space: nowrap; }
.last .step { padding-left: 29px; }
.step i { width: 24px; height: 24px; line-height: 20px; border: 2px solid #d8d8d8; border-radius: 12px; text-align: center; font-style: normal; }
.active .step { padding-left: 30px; background: #c2dcec; color: #333; font-weight: 400; }
.active i { border: 1px solid #7bb9dc; line-height: 22px; color: #027cc1; }
.active svg { stroke: none; }
.next { width: 130px; height: 32px; gap: 10px; border-radius: 2px; background: #027cc1; color: #fff; font-size: 12px; font-weight: 600; }
.work { flex: 1; min-height: 0; display: flex; gap: 20px; padding: 0 10px; }

/* form panel */
.panel { flex: none; width: 448px; padding-top: 10px; }
.panel h2 { height: 31px; margin-bottom: 20px; border-bottom: 1px solid #e6e6e6; font-size: 19px; line-height: 26px; }
.field { margin-bottom: 10px; }
.field label { display: block; margin-bottom: 7px; color: #605e5c; }
.field em { color: #e8174b; font-style: normal; }
.field > input, textarea, .selwrap, .refs input { display: block; width: 100%; height: 36px; padding: 0 8px; border: 1px solid #c4c2c1; border-radius: 2px; background: #f3f2f1; }
textarea { height: 135px; resize: none; }
.switch { display: flex; align-items: center; justify-content: space-between; width: 44px; height: 24px; padding: 0 2px 0 6px; border: 1px solid #e8e8e8; font-size: 9px; }
.switch input { appearance: none; width: 14px; height: 18px; background: #027cc1; }
.combo { position: relative; }
.selwrap { display: flex; align-items: center; padding: 0; }
.selwrap select { flex: 1; min-width: 0; height: 34px; padding: 0 0 0 8px; appearance: none; border: 0; background: none; outline: 0; }
.arrow { display: grid; place-items: center; width: 32px; height: 32px; margin-right: 1px; fill: none; stroke: #555; }
.arrow path { stroke-width: 1.2; }
.open { border-color: #027cc1; }
.open .arrow { background: #abcee1; }
.popup { position: absolute; z-index: 2; top: 64px; left: 0; right: 0; border: 1px solid #fff; background: #ebeae8; box-shadow: 0 4px 8px rgba(0,0,0,.3); }
.popup li { height: 33px; padding-left: 10px; line-height: 33px; }
.popup [aria-selected] { background: #e9e6e2; }
.drop { display: flex; align-items: center; gap: 9px; margin: 24px 0 36px 10px; }
.drop button { width: 136px; height: 33px; padding-right: 4px; border: 1px solid #edebe9; border-radius: 2px; font-size: 11px; }
.file, .state { padding-left: 10px; line-height: 18px; }
.file { padding-top: 3px; }
.file small, .state { color: #00507f; }
.file small { font-size: 10px; vertical-align: 1px; }
.state { font-size: 12px; line-height: 16px; }

/* editor */
.editor { flex: 1; min-width: 0; display: flex; flex-direction: column; padding-top: 13px; }
.tools { display: flex; align-items: center; gap: 5px; }
.tools > button { width: 36px; height: 36px; padding: 0 4px 2px 0; border: 1px solid #efedec; border-radius: 2px; stroke: #005083; stroke-width: 2; }
.tools > .tx { padding: 0 6px 0 0; font: 700 17px/20px "Liberation Serif", serif; color: #005083; }
.tools > .it { font-style: italic; padding-right: 10px; font-size: 18px; }
.tools > .un { text-decoration: underline; font-weight: 400; }
.tools > .img { width: 53px; height: 33px; padding: 0 4px 0 0; font-size: 12px; }
.picks { display: flex; gap: 5px; margin-left: auto; }
.picks .selwrap { width: 150px; color: #a19f9d; }
.refs { display: flex; align-items: center; margin: 8px 0 4px; color: #605e5c; }
.refs label { flex: none; width: 54px; }
.refs .fl { width: 63px; margin-left: 30px; }
#addr { width: 277px; background: #f7f7f6; border-color: #dcdad9; color: #b8b6b4; }
#formula { flex: 1; }
.sheet { flex: 1; min-height: 0; display: flex; flex-direction: column; border-radius: 4px; overflow: hidden; background: #fff; font-family: "Liberation Sans", Arial, sans-serif; }
.view { flex: 1; min-height: 0; display: flex; }
.grid { flex: 1; min-width: 0; overflow: hidden; }
table { width: 100%; table-layout: fixed; border-collapse: separate; border-spacing: 0; }
.cn { width: 26px; }
.ca { width: 23px; }
.cz { width: 8px; }
th, td { padding: 2px 0 0; border: 0 solid #ccc; border-width: 0 1px 1px 0; text-align: left; vertical-align: top; white-space: nowrap; font-size: 13px; line-height: 15px; font-weight: 700; color: #222; }
th { border-color: #b8b8b8; background: #ededed; text-align: center; font-weight: 400; color: #333; }
thead th { height: 21px; font-size: 14px; padding-top: 2px; }
.sel { background: #e0e0e0; border-bottom: 2px solid #0688cc; color: #111; }
.cur { background: #e0e0e0; color: #111; }
.cell { position: relative; box-shadow: inset 0 0 0 1px #0688cc, 0 0 0 1px #0688cc; border-color: #0688cc; }
.h16 { height: 16px; }
.h16 th { padding: 0; }
.h19 { height: 19px; }
.h21 { height: 21px; }
.h24 { height: 24px; }
.h25 { height: 25px; }
.h27 { height: 27px; }
.h16 td { padding: 0; }
.box, .title { border-color: #222; box-shadow: inset 1px 1px 0 #222; }
.title { padding: 3px 0 0 2px; font-size: 19px; line-height: 23px; color: #000; border-color: #000; }
tr > :last-child { border-right: 0; }
.vbar { width: 7px; padding: 15px 0 62px; background: #f1f3f5; }
.vbar i { display: block; height: 100%; border-radius: 3px; background: #c1c1c1; }
.hbar { height: 8px; padding: 0 43px 0 15px; background: #eef1f5; border-bottom: 1px solid #b4b4b4; }
.hbar i { display: block; height: 7px; border-radius: 3px; background: #c2c2c2; }
.sheets { display: flex; height: 19px; background: #b3b3b3; }
.pager { display: flex; width: 137px; padding-right: 1px; }
.pager button { flex: 1; fill: #7f7f7f; }
.sh { width: 90px; border-right: 1px solid #bfc0c3; background: #d0d1d6; color: #747474; font-size: 11px; }
.sh.on { width: 113px; background: #fff; color: #555; }

/* taskbar */
.taskbar { flex: none; display: grid; grid-template-columns: 1fr auto 1fr; height: 48px; border-top: 1px solid #3b403b; background: linear-gradient(90deg, #1b2716, #28251a 28%, #1d2a17 38%, #2b2317 47%, #1b2a1a 60%, #212718 75%, #1a2117 88%, #2a2319); color: #fff; }
.pins { grid-column: 2; display: flex; }
.pins button { position: relative; width: 44px; height: 46px; }
.pins svg { width: 24px; height: 24px; overflow: visible; }
.it9 { font-size: 9px; font-weight: 700; fill: #fff; }
.run::after { content: ""; position: absolute; bottom: 4px; width: 6px; height: 3px; border-radius: 2px; background: #9a9a96; }
.front { background: linear-gradient(#0000 3px, #ffffff1a 3px, #ffffff1a 43px, #0000 43px); }
.front::after { width: 16px; background: #c9bd83; }
.tray { display: flex; align-items: center; justify-content: flex-end; gap: 18px; padding-right: 19px; font-size: 12px; line-height: 16px; fill: none; stroke: #fff; stroke-width: 1.3; }
.tray svg { fill: none; }
.lang, .tray time { stroke: none; }
.net { display: flex; align-items: center; gap: 6px; }
.tray time { text-align: right; font-size: 11px; }
```
